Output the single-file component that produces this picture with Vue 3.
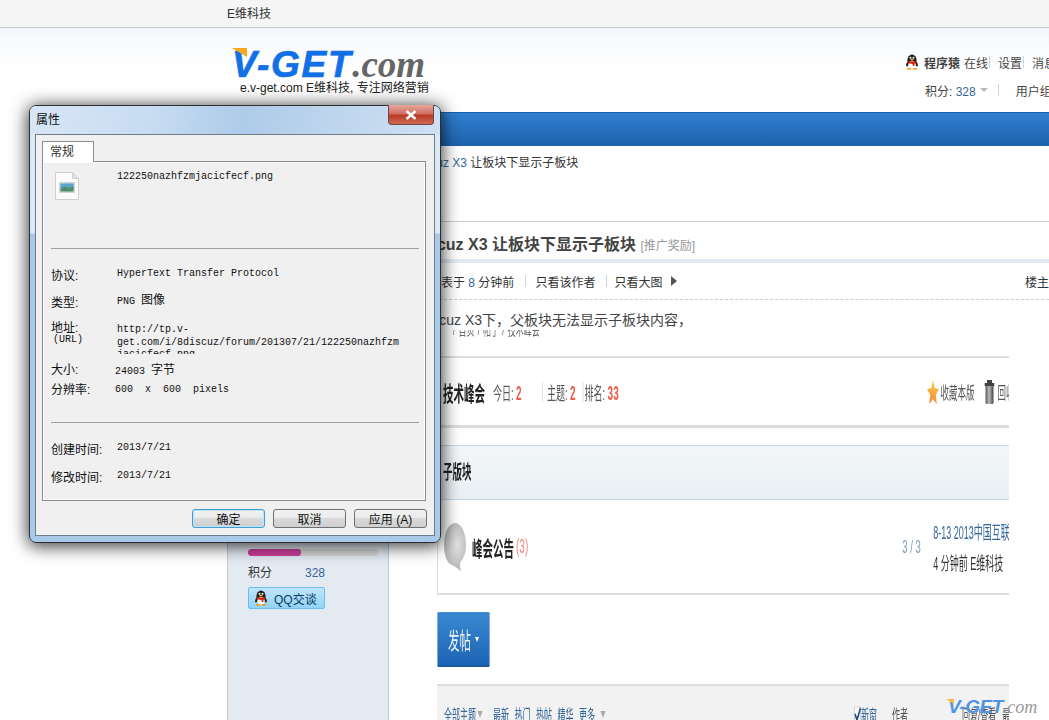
<template>
  <div class="desktop">
    <svg class="defs" width="0" height="0">
      <symbol id="qq" viewBox="0 0 16 16">
        <ellipse cx="8" cy="6.5" rx="4.6" ry="6" fill="#1a1a1a" />
        <ellipse cx="3.6" cy="10" rx="1.3" ry="2.6" fill="#222" transform="rotate(22 3.6 10)" />
        <ellipse cx="12.4" cy="10" rx="1.3" ry="2.6" fill="#222" transform="rotate(-22 12.4 10)" />
        <ellipse cx="8" cy="10.8" rx="3.6" ry="3.8" fill="#fff" />
        <circle cx="6.5" cy="3.8" r="1" fill="#fff" />
        <circle cx="9.5" cy="3.8" r="1" fill="#fff" />
        <ellipse cx="8" cy="5.6" rx="1.8" ry=".9" fill="#f5a912" />
        <path d="M3.6 7.4h8.8l-.4 1.8-1.6.5v2.2H8.9l-.4-1.9-4.4-.8z" fill="#d9200f" />
        <path d="M3 14h4.2v1.5H3zM8.8 14H13v1.5H8.8z" fill="#f29a11" />
      </symbol>
    </svg>

    <div class="topbar"><span class="topbar-text">E维科技</span></div>

    <header class="masthead">
      <div class="logo-block">
        <div class="logo">
          <i class="wing"></i>
          <span class="logo-vget">V-GET</span><span class="logo-com">.com</span>
        </div>
        <div class="slogan">e.v-get.com E维科技, 专注网络营销</div>
      </div>
      <div class="user-info">
        <div class="user-row">
          <svg class="qq-icon"><use href="#qq" /></svg>
          <b>程序猿</b><span class="after-name">在线</span><i class="pipe"></i><span>设置</span><i class="pipe"></i><span>消息</span>
        </div>
        <div class="user-row second">
          <span>积分: <em>328</em></span><i class="caret"></i><i class="pipe wide"></i><span>用户组</span>
        </div>
      </div>
    </header>

    <main class="content">
      <nav class="navbar"></nav>
      <div class="crumbs"><a>Discuz X3</a> 让板块下显示子板块</div>
      <div class="columns">
        <aside class="sidebar">
          <div class="progress"><div class="progress-fill" :style="{ width: '41%' }"></div></div>
          <div class="score"><span>积分</span><a>328</a></div>
          <div class="qq-chat">
            <svg class="qq-icon"><use href="#qq" /></svg>
            <span>QQ交谈</span>
          </div>
        </aside>

        <section class="thread">
          <h1 class="thread-title">Discuz X3 让板块下显示子板块 <small>[推广奖励]</small></h1>
          <div class="thread-bar"></div>
          <div class="author-row">
            <span class="posted">发表于 <em>8</em> 分钟前</span>
            <i class="pipe"></i><span>只看该作者</span>
            <i class="pipe second"></i><span>只看大图</span>
            <i class="arrow"></i>
            <span class="floor">楼主</span>
          </div>
          <p class="post-text">Discuz X3下，父板块无法显示子板块内容，</p>

          <div class="shot-frame">
            <div class="shot">
              <div class="shot-crumb">/ 首页 / 帖子 / 技术峰会</div>
              <div class="forum-row">
                <b class="forum-name">技术峰会</b>
                <span class="stat first">今日: <em>2</em></span>
                <i class="shot-pipe"></i>
                <span class="stat">主题: <em>2</em></span>
                <i class="shot-pipe late"></i>
                <span class="stat">排名: <em>33</em></span>
                <div class="forum-tools">
                  <svg class="star" viewBox="0 0 24 24">
                    <defs>
                      <linearGradient id="starfill" x1="0" y1="0" x2="0" y2="1">
                        <stop offset="0" stop-color="#fbd04a" />
                        <stop offset="1" stop-color="#f5883a" />
                      </linearGradient>
                    </defs>
                    <path d="M12 0l3.6 8.3 8.4.8-6.3 5.900 1.900 9L12 19.300 4.400 24l1.900-9L0 9.100l8.400-.8z" fill="url(#starfill)" />
                  </svg>
                  <span>收藏本版</span>
                  <i class="shot-pipe"></i>
                  <svg class="bin" viewBox="0 0 20 24">
                    <defs>
                      <linearGradient id="binfill" x1="0" y1="0" x2="1" y2="0">
                        <stop offset="0" stop-color="#555" />
                        <stop offset=".45" stop-color="#bbb" />
                        <stop offset="1" stop-color="#444" />
                      </linearGradient>
                    </defs>
                    <path d="M5 0h10v3h5v3H0V3h5z" fill="#444" />
                    <path d="M2 6h16v17l-2 1H4l-2-1z" fill="url(#binfill)" />
                  </svg>
                  <span>回收站</span>
                </div>
              </div>
              <div class="sub-head"><b>子版块</b></div>
              <div class="sub-box">
                <svg class="bubble" viewBox="0 0 44 48">
                  <defs>
                    <radialGradient id="bubblefill" cx=".6" cy=".45" r=".7">
                      <stop offset="0" stop-color="#e2e2e2" />
                      <stop offset="1" stop-color="#a8a8a8" />
                    </radialGradient>
                  </defs>
                  <path d="M22 0C9 0 0 10 0 22c0 10 6 18 15 20 6 1 11 3 19 6-2-4-3-7-1-9 7-4 11-10 11-17C44 10 35 0 22 0z" fill="url(#bubblefill)" />
                </svg>
                <b class="sub-name">峰会公告</b><span class="sub-count">(3)</span>
                <span class="sub-nums">3 / 3</span>
                <div class="sub-last">
                  <a>8-13 2013中国互联网大会</a>
                  <span>4 分钟前 E维科技</span>
                </div>
              </div>
              <div class="post-btn">发帖<i></i></div>
              <div class="toolbar">
                <a class="tool-all">全部主题</a><i class="tool-caret"></i>
                <a>最新</a><a>热门</a><a>热帖</a><a>精华</a><a>更多</a><i class="tool-caret"></i>
                <div class="tool-right">
                  <svg class="tick" viewBox="0 0 14 16">
                    <path d="M1 1h12v14H1z" fill="#fff" stroke="#ccc" />
                    <path d="M2 8l4 6 7-12" stroke="#274f7f" stroke-width="3" fill="none" />
                  </svg>
                  <a>新窗</a>
                  <span class="tool-author">作者</span>
                  <span class="tool-reply">回复/查看</span>
                  <span>最后发表</span>
                </div>
              </div>
            </div>
          </div>
        </section>
      </div>
    </main>

    <div class="watermark"><i class="wm-wing"></i><span class="wm-vget">V-GET</span><span class="wm-com">.com</span></div>

    <div class="dialog">
      <div class="title-row">
        <span class="dialog-title">属性</span>
        <div class="close-btn">
          <svg viewBox="0 0 12 10" width="12" height="10">
            <path d="M1.500 1l9 8M10.500 1l-9 8" stroke="#fff" stroke-width="2.400" fill="none" />
          </svg>
        </div>
      </div>
      <div class="dialog-body">
        <div class="tab">常规</div>
        <div class="tab-panel">
          <div class="file-row">
            <svg class="file-icon" viewBox="0 0 24 28">
              <path d="M.5.5h17l6 6v21H.5z" fill="#fbfbfb" stroke="#cfcfcf" />
              <path d="M17.500.5v6h6z" fill="#e4e4e4" stroke="#cfcfcf" />
              <path d="M4 10h16v11H4z" fill="#cfd6da" />
              <path d="M5.500 11.500h13v5h-13z" fill="#5ba5c8" />
              <path d="M5.500 16.500l4-2 4 1.500 5-1.500v5h-13z" fill="#4e8f6e" />
            </svg>
            <span class="file-name">122250nazhfzmjacicfecf.png</span>
          </div>
          <hr class="rule" />
          <div class="prop-row first">
            <span class="prop-label">协议:</span><span class="prop-value">HyperText Transfer Protocol</span>
          </div>
          <div class="prop-row">
            <span class="prop-label">类型:</span><span class="prop-value type">PNG <span class="cn">图像</span></span>
          </div>
          <div class="prop-row addr">
            <span class="prop-label">地址:<small>(URL)</small></span>
            <span class="prop-value">http://tp.v-<br />get.com/i/8discuz/forum/201307/21/122250nazhfzm<br />jacicfecf.png</span>
          </div>
          <div class="prop-row tight">
            <span class="prop-label">大小:</span><span class="prop-value num">24003 <span class="cn">字节</span></span>
          </div>
          <div class="prop-row tight">
            <span class="prop-label">分辨率:</span><span class="prop-value num">600&nbsp;&nbsp;x&nbsp;&nbsp;600&nbsp;&nbsp;pixels</span>
          </div>
          <hr class="rule lower" />
          <div class="prop-row date">
            <span class="prop-label">创建时间:</span><span class="prop-value">2013/7/21</span>
          </div>
          <div class="prop-row date">
            <span class="prop-label">修改时间:</span><span class="prop-value">2013/7/21</span>
          </div>
        </div>
        <div class="dialog-buttons">
          <button type="button" class="default">确定</button>
          <button type="button">取消</button>
          <button type="button">应用 (A)</button>
        </div>
      </div>
    </div>
  </div>
</template>

<script setup>
</script>

<style>
html, body {
  margin: 0;
  background: #fff;
  overflow: hidden;
}
</style>

<style scoped>
.desktop {
  position: relative;
  width: 1049px;
  height: 720px;
  overflow: hidden;
  background: #fff;
  color: #333;
  font-family: "Liberation Sans", "Noto Sans CJK SC", sans-serif;
  font-size: 12px;
}
.defs {
  position: absolute;
}
em {
  font-style: normal;
}
a {
  color: inherit;
}

/* --- top --- */
.topbar {
  height: 27px;
  line-height: 28px;
  background: #f5f5f5;
  border-bottom: 1px solid #ccc;
  padding-left: 227px;
}
.masthead {
  height: 84px;
  margin-left: 227px;
  display: flex;
  justify-content: space-between;
  position: relative;
}
.masthead::before {
  content: "";
  position: absolute;
  left: -227px;
  right: 0;
  top: 0;
  height: 40px;
  background: linear-gradient(#f3f6fa, #fff);
}
.logo-block {
  position: relative;
  padding: 15px 0 0 5px;
}
.logo {
  position: relative;
  height: 36px;
  line-height: 36px;
  white-space: nowrap;
}
.wing {
  position: absolute;
  left: 0;
  top: 5px;
  width: 15px;
  height: 9px;
  background: #f9a51f;
  clip-path: polygon(0 0, 100% 0, 100% 100%);
  z-index: 1;
}
.logo-vget {
  font: italic bold 37px "Liberation Sans", sans-serif;
  color: #1170e6;
  letter-spacing: 1.7px;
  -webkit-text-stroke: .7px #1170e6;
}
.logo-com {
  font: italic bold 37px "Liberation Serif", serif;
  color: #666;
}
.slogan {
  margin: 1px 0 0 8px;
  font-size: 12px;
  line-height: 17px;
  color: #222;
  white-space: nowrap;
}
.user-info {
  position: relative;
  width: 145px;
  padding-top: 25px;
  white-space: nowrap;
  color: #444;
}
.user-row {
  display: flex;
  align-items: center;
  height: 18px;
}
.user-row.second {
  margin-top: 10px;
  padding-left: 21px;
}
.user-row em {
  color: #336699;
}
.user-row b {
  margin-left: 4px;
  color: #444;
}
.after-name {
  margin-left: 4px;
}
.qq-icon {
  width: 16px;
  height: 16px;
  flex: none;
}
.pipe {
  display: inline-block;
  width: 1px;
  height: 12px;
  margin: 0 8px 0 1px;
  background: #ccd6e0;
  flex: none;
}
.pipe.wide {
  margin: 0 17px 0 10px;
}
.caret {
  width: 0;
  height: 0;
  margin-left: 4px;
  border: 4px solid transparent;
  border-top: 4px solid #bbb;
  border-bottom: 0;
}

/* --- page --- */
.content {
  margin-left: 227px;
}
.navbar {
  height: 33px;
  background: linear-gradient(#2f80d0, #1f62ad);
  border-top: 1px solid #1a5fa8;
}
.crumbs {
  height: 76px;
  padding: 9px 0 0 186px;
  box-sizing: border-box;
  line-height: 16px;
  border-bottom: 1px solid #ccc;
  white-space: nowrap;
}
.crumbs a {
  color: #336699;
}
.columns {
  display: flex;
  height: 500px;
}
.sidebar {
  margin-top: 11px;
  padding: 317px 0 0 20px;
  width: 140px;
  background: #e3eaf2;
  border-left: 1px solid #c4ccd4;
  border-right: 1px solid #b4d0e6;
}
.progress {
  width: 130px;
  height: 7px;
  margin-top: -1px;
  background: #d8d8d8;
  border-radius: 3px;
  overflow: hidden;
}
.progress-fill {
  height: 100%;
  background: #cf3f9b;
  border-radius: 3px;
}
.score {
  display: flex;
  margin-top: 8px;
  line-height: 18px;
}
.score a {
  margin-left: 33px;
  color: #336699;
}
.qq-chat {
  display: flex;
  align-items: center;
  width: 75px;
  height: 20px;
  margin-top: 5px;
  background: linear-gradient(#bfe6fb, #92d2f5);
  border: 1px solid #6cbcee;
  border-radius: 2px;
  color: #0b3a5c;
}
.qq-chat .qq-icon {
  margin: 0 5px 0 4px;
}

.thread {
  flex: 1;
  min-width: 0;
  white-space: nowrap;
}
.thread-title {
  height: 37px;
  margin: 0;
  padding: 13px 0 0 23px;
  box-sizing: border-box;
  font-size: 16px;
  line-height: 20px;
  color: #444;
}
.thread-title small {
  font-size: 12px;
  font-weight: normal;
  color: #999;
}
.thread-bar {
  height: 4px;
  background: #e3eaf2;
}
.author-row {
  display: flex;
  align-items: center;
  height: 36px;
  padding-left: 40px;
  border-bottom: 1px dashed #ccc;
  position: relative;
}
.author-row em {
  color: #336699;
}
.author-row .pipe {
  margin: 0 9px 0 11px;
}
.author-row .pipe.second {
  margin: 0 7px 0 11px;
}
.arrow {
  margin-left: 9px;
  border: 5px solid transparent;
  border-left: 6px solid #555;
  border-right: 0;
}
.floor {
  margin-left: auto;
  font-size: 12px;
  width: 24px;
}
.post-text {
  margin: 0;
  padding: 11px 0 0 30px;
  height: 19px;
  font-size: 14px;
  line-height: 19px;
  color: #444;
}

/* the screenshot inside the post is squeezed horizontally */
.shot-frame {
  width: 572px;
  margin-left: 48px;
  overflow: hidden;
  height: 390px;
}
.shot {
  width: 1144px;
  transform: scaleX(.5);
  transform-origin: left top;
  filter: blur(.35px);
  color: #333;
  font-size: 18px;
}
.shot-crumb {
  height: 33px;
  line-height: 14px;
  margin-top: -7px;
  padding-left: 32px;
  color: #666;
  font-size: 16px;
  word-spacing: 2px;
  overflow: hidden;
}
.forum-row {
  display: flex;
  align-items: center;
  height: 67px;
  padding-left: 12px;
  border-top: 2px solid #ddd;
  border-bottom: 3px solid #ddd;
}
.forum-name {
  font-size: 21px;
  color: #222;
}
.stat em {
  color: #f0604a;
  font-weight: bold;
  font-size: 20px;
}
.stat.first {
  margin-left: 16px;
  width: 90px;
}
.stat {
  color: #555;
}
.shot-pipe {
  display: block;
  width: 2px;
  height: 20px;
  margin: 0 8px;
  background: #d8e2ea;
}
.shot-pipe.late {
  margin: 0 2px 0 14px;
}
.forum-tools {
  display: flex;
  align-items: center;
  margin-left: auto;
  width: 164px;
  white-space: nowrap;
  color: #555;
  font-size: 17px;
}
.star {
  width: 24px;
  height: 24px;
  margin-right: 3px;
  flex: none;
}
.bin {
  width: 20px;
  height: 24px;
  margin: 0 6px 0 4px;
  flex: none;
}
.sub-head {
  height: 53px;
  margin-top: 17px;
  line-height: 53px;
  padding-left: 12px;
  background: linear-gradient(#f3f7f9, #e9eff3);
  border-top: 1px solid #c4d9e8;
  border-bottom: 1px solid #c4d9e8;
  font-size: 19px;
  color: #222;
}
.sub-box {
  display: flex;
  align-items: center;
  height: 93px;
  padding-left: 12px;
  border-left: 2px solid #ddd;
  border-bottom: 2px solid #ddd;
  white-space: nowrap;
}
.bubble {
  width: 44px;
  height: 48px;
  flex: none;
}
.sub-name {
  margin-left: 12px;
  font-size: 21px;
  color: #222;
}
.sub-count {
  margin-left: 4px;
  color: #f09080;
  font-size: 20px;
}
.sub-nums {
  flex: none;
  margin-left: 748px;
  width: 62px;
  color: #7f9fc0;
  font-size: 19px;
}
.sub-last {
  flex: none;
  display: flex;
  flex-direction: column;
  gap: 11px;
  padding-top: 4px;
  line-height: 20px;
}
.sub-last a {
  color: #336699;
}
.post-btn {
  display: flex;
  align-items: center;
  justify-content: center;
  gap: 8px;
  width: 106px;
  height: 55px;
  box-sizing: border-box;
  margin-top: 17px;
  background: linear-gradient(#3a88d2, #1e64b4);
  border: 1px solid #4a90d0;
  border-bottom: 2px solid #1a5aa0;
  border-radius: 3px;
  color: #eef6fc;
  font-size: 23px;
}
.post-btn i {
  border: 4px solid transparent;
  border-top: 5px solid #fff;
  border-bottom: 0;
}
.toolbar {
  display: flex;
  align-items: center;
  gap: 11px;
  height: 56px;
  margin-top: 17px;
  background: #f2f2f2;
  border-top: 2px solid #ddd;
  padding-left: 14px;
  font-size: 16px;
  color: #336699;
  white-space: nowrap;
}
.tool-all {
  margin-right: -8px;
}
.tool-caret {
  margin-right: 10px;
  border: 5px solid transparent;
  border-top: 7px solid #aaa;
  border-bottom: 0;
}
.tool-right {
  display: flex;
  align-items: center;
  margin-left: auto;
  width: 310px;
  color: #555;
}
.tool-right a {
  color: #336699;
  margin-left: 0;
}
.tick {
  width: 14px;
  height: 16px;
  flex: none;
}
.tool-author {
  margin-left: 30px;
}
.tool-reply {
  margin: 0 12px 0 108px;
}
.watermark {
  position: absolute;
  left: 948px;
  top: 696px;
  white-space: nowrap;
  line-height: 24px;
}
.wm-wing {
  position: absolute;
  left: -2px;
  top: 3px;
  width: 8px;
  height: 5px;
  background: #f9b84a;
  clip-path: polygon(0 0, 100% 0, 100% 100%);
}
.wm-vget {
  font: italic bold 19px "Liberation Sans", sans-serif;
  letter-spacing: -.5px;
  color: #4f93e6;
}
.wm-com {
  font: italic 18px "Liberation Serif", serif;
  color: #999;
}

/* --- properties window --- */
.dialog {
  position: absolute;
  left: 29px;
  top: 105px;
  width: 412px;
  height: 438px;
  box-sizing: border-box;
  border: 1px solid #2b2f33;
  border-radius: 7px;
  background: linear-gradient(#dbe8f6 0, #dbe8f6 127px, #a9c9e9 128px, #a9c9e9 100%);
  box-shadow: 0 2px 17px 1px rgba(0, 0, 0, .8);
  display: flex;
  flex-direction: column;
  padding: 0 5px 6px;
  z-index: 5;
}
.title-row {
  position: relative;
  height: 28px;
  flex: none;
  margin: 0 -5px;
  padding-left: 6px;
  border-radius: 6px 6px 0 0;
  background: linear-gradient(100deg, #d8e6f5 0, #c7dcf2 30%, #aecbe8 52%, #bad3ec 68%, #cfe0f3 100%);
}
.dialog-title {
  line-height: 28px;
  color: #111;
}
.close-btn {
  position: absolute;
  right: 6px;
  top: -1px;
  width: 46px;
  height: 20px;
  box-sizing: border-box;
  border: 1px solid #6d4742;
  border-top: 0;
  border-radius: 0 0 4px 4px;
  background: linear-gradient(#e6a79d, #d27064 45%, #b93a27 55%, #cf6a52);
  display: flex;
  align-items: center;
  justify-content: center;
}
.dialog-body {
  flex: 1;
  display: flex;
  flex-direction: column;
  background: #f0f0f0;
  border: 1px solid #6f7d8b;
  padding: 6px 8px 0 6px;
  min-height: 0;
}
.tab {
  position: relative;
  z-index: 1;
  width: 52px;
  height: 21px;
  box-sizing: border-box;
  padding-left: 7px;
  line-height: 20px;
  background: #fff;
  border: 1px solid #898c95;
  border-bottom: 0;
  margin-bottom: -1px;
}
.tab-panel {
  height: 340px;
  flex: none;
  box-sizing: border-box;
  background: #f0f0f0;
  border: 1px solid #898c95;
  box-shadow: inset 0 0 0 1px #fff;
  padding: 0 6px 0 8px;
  color: #111;
}
.file-row {
  display: flex;
  height: 86px;
  padding-top: 10px;
  box-sizing: border-box;
  padding-left: 4px;
}
.file-icon {
  width: 24px;
  height: 28px;
  flex: none;
}
.file-name {
  margin-left: 38px;
  font: 10px/9px "Liberation Mono", monospace;
}
.rule {
  margin: 0;
  border: 0;
  height: 1px;
  background: #a0a0a0;
}
.rule.lower {
  margin-top: 22px;
}
.prop-row {
  display: flex;
  height: 27px;
  line-height: 26px;
}
.prop-row.first {
  margin-top: 14px;
}
.prop-label {
  width: 66px;
  flex: none;
}
.prop-value {
  font: 10px/22px "Liberation Mono", monospace;
}
.prop-value.type {
  line-height: 24px;
}
.cn {
  font: 12px "Noto Sans CJK SC", sans-serif;
}
.prop-row.addr {
  height: 35px;
  margin-top: 2px;
  overflow: hidden;
  line-height: 18px;
}
.addr small {
  display: block;
  font: 10px/10px "Liberation Mono", monospace;
  margin: -2px 0 0 2px;
}
.addr .prop-value {
  line-height: 12.5px;
  padding-top: 5px;
}
.prop-row.tight {
  height: 20px;
  line-height: 20px;
}
.addr + .tight {
  margin-top: 6px;
}
.num {
  line-height: 20px;
  margin-left: -2px;
}
.prop-row.date {
  height: 28px;
  line-height: 28px;
}
.rule.lower + .date {
  margin-top: 13px;
}
.date .prop-value {
  line-height: 24px;
}
.dialog-buttons {
  display: flex;
  justify-content: flex-end;
  gap: 8px;
  margin: 8px -1px 0 0;
}
.dialog-buttons button {
  width: 73px;
  height: 19px;
  padding: 0;
  border: 1px solid #707070;
  border-radius: 3px;
  background: linear-gradient(#f2f2f2 0, #ebebeb 45%, #dadada 50%, #cfcfcf 100%);
  font: 12px "Liberation Sans", "Noto Sans CJK SC", sans-serif;
  color: #111;
}
.dialog-buttons button.default {
  border-color: #3c9fd8;
  box-shadow: inset 0 0 0 1px #bfe4f8;
}
</style>
